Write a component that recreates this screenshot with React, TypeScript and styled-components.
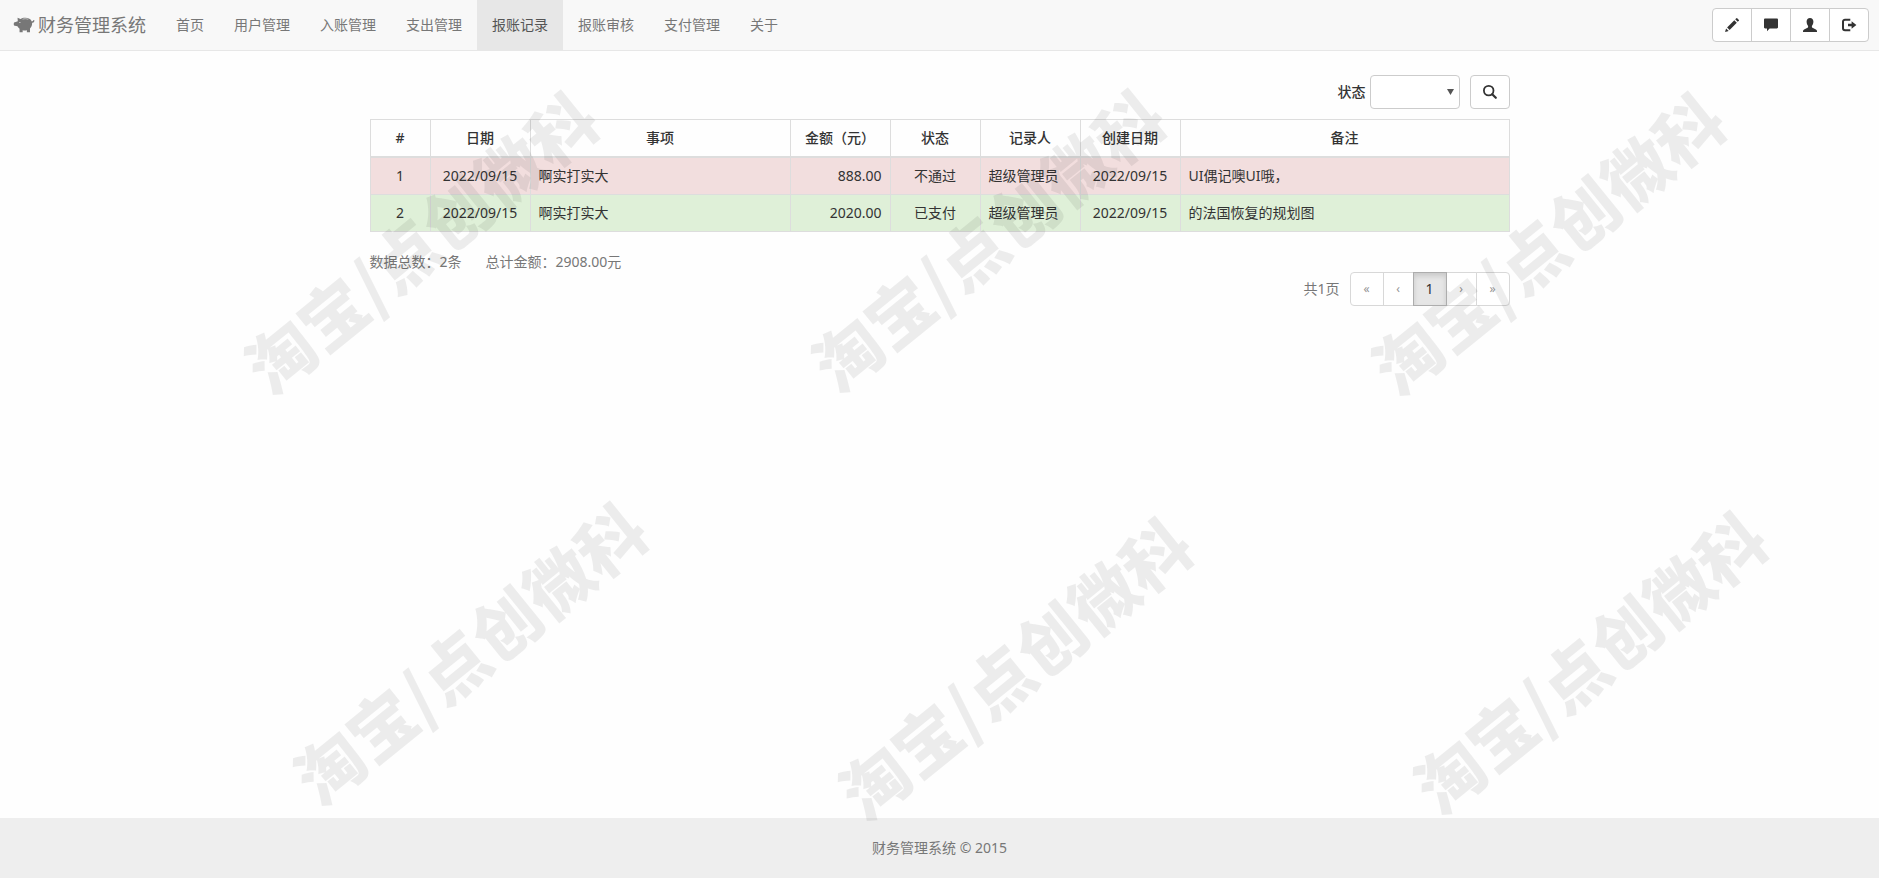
import React from "react";
import styled, { createGlobalStyle } from "styled-components";

const GlobalStyle = createGlobalStyle`
  *, *::before, *::after { box-sizing: border-box; }
  body {
    margin: 0;
    background: #fefefe;
    color: #333;
    font-family: "Noto Sans", "Noto Sans CJK SC", sans-serif;
    font-size: 14px;
    line-height: 20px;
  }
  button, select { font: inherit; color: inherit; }
`;

const Page = styled.div`
  display: flex;
  flex-direction: column;
  min-height: 100vh;
`;

const Navbar = styled.nav`
  display: flex;
  align-items: center;
  height: 51px;
  padding-right: 10px;
  background: #f8f8f8;
  border-bottom: 1px solid #e7e7e7;
`;

const Brand = styled.a`
  display: flex;
  align-items: center;
  gap: 4px;
  padding: 0 15px 0 14px;
  color: #777;
  font-size: 18px;
  white-space: nowrap;
  text-decoration: none;
`;

const NavList = styled.ul`
  display: flex;
  margin: 0;
  padding: 0;
  list-style: none;
`;

const NavLink = styled.a<{ $active?: boolean }>`
  display: block;
  padding: 15px;
  color: ${(p) => (p.$active ? "#555" : "#777")};
  background: ${(p) => (p.$active ? "#e7e7e7" : "transparent")};
  white-space: nowrap;
  text-decoration: none;
`;

const ButtonGroup = styled.div`
  display: flex;
  margin-left: auto;
`;

const IconButton = styled.button`
  display: flex;
  align-items: center;
  justify-content: center;
  width: 40px;
  height: 34px;
  padding: 0;
  color: #333;
  background: #fff;
  border: 1px solid #ccc;
  border-radius: 4px;
  cursor: pointer;

  ${ButtonGroup} & {
    border-radius: 0;
  }
  ${ButtonGroup} & + & {
    margin-left: -1px;
  }
  ${ButtonGroup} &:first-child {
    border-radius: 4px 0 0 4px;
  }
  ${ButtonGroup} &:last-child {
    border-radius: 0 4px 4px 0;
  }
`;

const Main = styled.main`
  flex: 1;
  width: 100%;
  max-width: 1170px;
  margin: 0 auto;
  padding: 24px 15px;
`;

const FilterForm = styled.form`
  display: flex;
  align-items: center;
  justify-content: flex-end;
  gap: 4px;
  margin-bottom: 10px;
`;

const FilterLabel = styled.label`
  font-weight: 500;
`;

const SelectBox = styled.div`
  position: relative;
  margin-right: 6px;

  svg {
    position: absolute;
    top: 14px;
    right: 6px;
    pointer-events: none;
  }
`;

const Select = styled.select`
  display: block;
  width: 90px;
  height: 34px;
  padding: 6px 12px;
  background: #fff;
  border: 1px solid #ccc;
  border-radius: 4px;
  appearance: none;
`;

const Table = styled.table`
  width: 100%;
  table-layout: fixed;
  border-collapse: collapse;
`;

const HeadCell = styled.th<{ $width?: number }>`
  width: ${(p) => (p.$width ? `${p.$width}px` : "auto")};
  padding: 8px 0;
  border: 1px solid #ddd;
  border-bottom-width: 2px;
  text-align: center;
  font-weight: 500;
`;

const Row = styled.tr<{ $tone: "danger" | "success" }>`
  background: ${(p) => (p.$tone === "danger" ? "#f2dede" : "#dff0d8")};
`;

const Cell = styled.td<{ $align?: "left" | "center" | "right" }>`
  padding: 8px;
  border: 1px solid #ddd;
  text-align: ${(p) => p.$align ?? "center"};
  white-space: nowrap;
`;

const Summary = styled.div`
  display: flex;
  gap: 24px;
  margin-top: 20px;
  color: #777;
`;

const PagerBar = styled.div`
  display: flex;
  align-items: center;
  justify-content: flex-end;
  gap: 10px;
  color: #777;
`;

const Pager = styled.div`
  display: flex;
`;

const PageButton = styled.button<{ $wide?: boolean }>`
  width: ${(p) => (p.$wide ? 34 : 31)}px;
  height: 34px;
  padding: 0;
  color: #333;
  background: #fff;
  border: 1px solid #ccc;

  & + & {
    margin-left: -1px;
  }
  &:first-child {
    border-radius: 4px 0 0 4px;
  }
  &:last-child {
    border-radius: 0 4px 4px 0;
  }
  &:disabled {
    color: #949494;
    border-color: #d8d8d8;
    font-size: 12px;
  }
  &[aria-current] {
    z-index: 1;
    background: #e6e6e6;
    border-color: #adadad;
    box-shadow: inset 0 3px 5px rgba(0, 0, 0, 0.125);
  }
`;

const Footer = styled.footer`
  padding: 20px;
  color: #777;
  background: #eee;
  text-align: center;
`;

const WatermarkLayer = styled.div`
  position: absolute;
  inset: 0;
  overflow: hidden;
  pointer-events: none;
`;

const Watermark = styled.span<{ $x: number; $y: number }>`
  position: absolute;
  left: ${(p) => p.$x}%;
  top: ${(p) => p.$y}px;
  color: rgba(0, 0, 0, 0.07);
  font-family: "Noto Sans CJK SC", sans-serif;
  font-size: 67px;
  font-weight: 900;
  line-height: 67px;
  white-space: nowrap;
  transform: translate(-50%, -50%) rotate(-39deg);
`;

const Glyph = ({ children }: { children: React.ReactNode }) => (
  <svg width="14" height="14" viewBox="0 0 14 14" fill="currentColor" overflow="visible" aria-hidden="true">
    {children}
  </svg>
);

const PiggyIcon = () => (
  <svg width="20" height="20" viewBox="0 0 18 18" fill="currentColor" overflow="visible" aria-hidden="true">
    <path d="M3.2 2.4 5.9 3.7C6.9 2.9 8.3 2.5 10 2.5c3 0 5.2 1.2 6 3.3.8 0 1.3-.4 1.5-1.2l1 .3c-.3 1.3-1 2-2.2 2.1.2 2-.6 3.8-1.9 5.1v3.4h-2.8v-1.8c-1.2.3-2.6.3-3.8 0v1.8H5v-3.2c-.9-.5-1.5-1.2-1.9-2.1L.8 9.7a1 1 0 0 1-1-1V7.6a1 1 0 0 1 1-1L3.4 5.7z" />
    <path d="M7.7 3.8c1.7-.6 3.5-.6 5.1.1" fill="none" stroke="#f8f8f8" strokeWidth=".5" />
    <circle cx="5.3" cy="6.8" r=".5" fill="#f8f8f8" />
  </svg>
);

const PencilIcon = () => (
  <Glyph>
    <path d="M11.8 0a.6.6 0 0 1 .4.2l1.7 1.7c.2.2.2.6 0 .8l-1.2 1.1-2.5-2.5L11.4.2a.6.6 0 0 1 .4-.2zM9.3 2.2l2.5 2.5-7.2 7.2-2.5-2.5zM1.1 10.4l2.6 2.6L0 14z" />
  </Glyph>
);

const CommentIcon = () => (
  <Glyph>
    <path d="M1.2 .5h11.6c.7 0 1.2.5 1.2 1.2v7.500c0 .7-.5 1.2-1.2 1.2H5.6L3 13.2v-2.8H1.2C.5 10.4 0 9.9 0 9.2V1.700C0 1 .5.5 1.200.5z" />
  </Glyph>
);

const UserIcon = () => (
  <Glyph>
    <path d="M7 0c2.100 0 3.400 1.500 3.400 3.600 0 1.700-.6 3.300-1.500 4.300v1c0 .4.200.7.600.9l3.400 1.600c.7.400 1.100.8 1.100 1.500V14H0v-1.100c0-.7.400-1.100 1.100-1.500l3.400-1.600c.4-.2.600-.5.600-.9v-1C4.200 6.900 3.600 5.300 3.600 3.600 3.600 1.500 4.900 0 7 0z" />
  </Glyph>
);

const LogOutIcon = () => (
  <Glyph>
    <path d="M8.300 1.700H3.100A2 2 0 0 0 1 3.700v6.600a2 2 0 0 0 2 2h5.300" fill="none" stroke="currentColor" strokeWidth="2" />
    <path d="M9.600 3.200 14.400 7l-4.800 3.800V8.300H6V5.700h3.600z" />
  </Glyph>
);

const SearchIcon = () => (
  <Glyph>
    <circle cx="5.700" cy="5.600" r="4.800" fill="none" stroke="currentColor" strokeWidth="1.800" />
    <path d="m9.200 9.200 3.600 3.600" fill="none" stroke="currentColor" strokeWidth="2.200" strokeLinecap="round" />
  </Glyph>
);

const navItems = ["首页", "用户管理", "入账管理", "支出管理", "报账记录", "报账审核", "支付管理", "关于"];

const columns: { title: string; width?: number }[] = [
  { title: "#", width: 60 },
  { title: "日期", width: 100 },
  { title: "事项", width: 260 },
  { title: "金额（元）", width: 100 },
  { title: "状态", width: 90 },
  { title: "记录人", width: 100 },
  { title: "创建日期", width: 100 },
  { title: "备注" },
];

const records = [
  { id: 1, tone: "danger" as const, date: "2022/09/15", item: "啊实打实大", amount: "888.00", status: "不通过", author: "超级管理员", created: "2022/09/15", note: "UI偶记噢UI哦，" },
  { id: 2, tone: "success" as const, date: "2022/09/15", item: "啊实打实大", amount: "2020.00", status: "已支付", author: "超级管理员", created: "2022/09/15", note: "的法国恢复的规划图" },
];

const watermarks = [
  { x: 22.3, y: 240 },
  { x: 52.5, y: 238 },
  { x: 82.3, y: 241 },
  { x: 24.9, y: 651 },
  { x: 53.9, y: 666 },
  { x: 84.5, y: 660 },
];

export default function App() {
  return (
    <Page>
      <GlobalStyle />
      <Navbar>
        <Brand href="#">
          <PiggyIcon />
          财务管理系统
        </Brand>
        <NavList>
          {navItems.map((name) => (
            <li key={name}>
              <NavLink href="#" $active={name === "报账记录"}>{name}</NavLink>
            </li>
          ))}
        </NavList>
        <ButtonGroup>
          <IconButton type="button" aria-label="编辑"><PencilIcon /></IconButton>
          <IconButton type="button" aria-label="消息"><CommentIcon /></IconButton>
          <IconButton type="button" aria-label="用户"><UserIcon /></IconButton>
          <IconButton type="button" aria-label="退出"><LogOutIcon /></IconButton>
        </ButtonGroup>
      </Navbar>

      <Main>
        <FilterForm onSubmit={(e) => e.preventDefault()}>
          <FilterLabel htmlFor="status">状态</FilterLabel>
          <SelectBox>
            <Select id="status" defaultValue="">
              <option value=""></option>
              <option value="rejected">不通过</option>
              <option value="paid">已支付</option>
            </Select>
            <svg width="7" height="6" viewBox="0 0 7 6" fill="#555" aria-hidden="true">
              <path d="M0 0h7L3.500 6z" />
            </svg>
          </SelectBox>
          <IconButton type="submit" aria-label="查询"><SearchIcon /></IconButton>
        </FilterForm>

        <Table>
          <thead>
            <tr>
              {columns.map((c) => (
                <HeadCell key={c.title} scope="col" $width={c.width}>{c.title}</HeadCell>
              ))}
            </tr>
          </thead>
          <tbody>
            {records.map((r) => (
              <Row key={r.id} $tone={r.tone}>
                <Cell>{r.id}</Cell>
                <Cell>{r.date}</Cell>
                <Cell $align="left">{r.item}</Cell>
                <Cell $align="right">{r.amount}</Cell>
                <Cell>{r.status}</Cell>
                <Cell $align="left">{r.author}</Cell>
                <Cell>{r.created}</Cell>
                <Cell $align="left">{r.note}</Cell>
              </Row>
            ))}
          </tbody>
        </Table>

        <Summary>
          <span>数据总数：2条</span>
          <span>总计金额：2908.00元</span>
        </Summary>
        <PagerBar>
          <span>共1页</span>
          <Pager>
            <PageButton type="button" $wide disabled>«</PageButton>
            <PageButton type="button" disabled>‹</PageButton>
            <PageButton type="button" $wide aria-current="page">1</PageButton>
            <PageButton type="button" disabled>›</PageButton>
            <PageButton type="button" $wide disabled>»</PageButton>
          </Pager>
        </PagerBar>
      </Main>

      <Footer>财务管理系统 © 2015</Footer>

      <WatermarkLayer aria-hidden="true">
        {watermarks.map((w) => (
          <Watermark key={w.x} $x={w.x} $y={w.y}>淘宝/点创微科</Watermark>
        ))}
      </WatermarkLayer>
    </Page>
  );
}
